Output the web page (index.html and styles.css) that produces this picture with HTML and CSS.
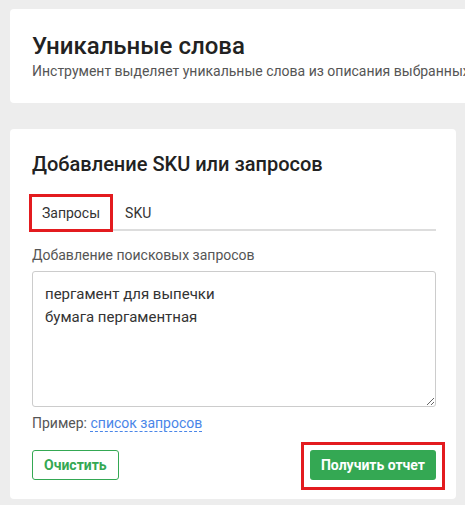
FILE: index.html
```html
<!DOCTYPE html>
<html lang="ru">
<head>
    <meta charset="UTF-8">
    <meta name="viewport" content="width=device-width, initial-scale=1.0">
    <title>Уникальные слова</title>
    <link rel="stylesheet" href="styles.css">
</head>
<body>
    <div class="card card-head">
        <h1>Уникальные слова</h1>
        <div class="subtitle">Инструмент выделяет уникальные слова из описания выбранных товаров</div>
    </div>

    <div class="card card-form">
        <h2>Добавление SKU или запросов</h2>

        <div class="tabs">
            <div class="tab active marked">Запросы</div>
            <div class="tab">SKU</div>
        </div>

        <label class="field-label" for="queries">Добавление поисковых запросов</label>
        <textarea id="queries">пергамент для выпечки
бумага пергаментная</textarea>

        <div class="example">Пример: <a href="#" class="dashed">список запросов</a></div>

        <div class="actions">
            <button class="btn btn-outline">Очистить</button>
            <span class="marked-box">
                <button class="btn btn-green">Получить отчет</button>
            </span>
        </div>
    </div>
</body>
</html>
```

FILE: styles.css
```css
body {
    margin: 0;
    padding: 9px 10px;
    background-color: #ededed;
    font-family: 'Roboto', 'Liberation Sans', sans-serif;
    color: #222;
    overflow: hidden;
}

.card {
    background-color: #fff;
    border-radius: 4px;
    box-sizing: border-box;
}

.card-head {
    width: 640px;
    padding: 23px 22px;
    margin-bottom: 26px;
}

h1 {
    margin: 0;
    font-size: 24px;
    line-height: 28px;
    font-weight: 500;
    color: #222;
}

.subtitle {
    margin-top: 2px;
    font-size: 14px;
    line-height: 18px;
    color: #555;
    white-space: nowrap;
}

.card-form {
    width: 446px;
    padding: 23px 20px 19px 22px;
}

h2 {
    margin: 0;
    font-size: 20px;
    line-height: 24px;
    font-weight: 500;
    color: #222;
}

.tabs {
    display: flex;
    margin-top: 21px;
    border-bottom: 2px solid #ddd;
}

.tab {
    padding: 6px 10px;
    font-size: 14px;
    line-height: 20px;
    color: #333;
    margin-right: 5px;
}

/* красная рамка-выделение */
.marked {
    outline: 3px solid #e31b1f;
    outline-offset: 0;
}

.marked-box {
    display: flex;
    border: 3px solid #e31b1f;
    padding: 5px 6px 7px 6px;
    margin: -8px -9px -10px -9px;
}

.field-label {
    display: block;
    margin-top: 14px;
    font-size: 14px;
    line-height: 20px;
    color: #555;
}

textarea {
    display: block;
    box-sizing: border-box;
    width: 404px;
    height: 136px;
    margin-top: 6px;
    padding: 11px 12px;
    border: 1px solid #ccc;
    border-radius: 3px;
    font-family: 'Roboto', 'Liberation Sans', sans-serif;
    font-size: 15px;
    line-height: 1.5;
    color: #333;
    resize: vertical;
}

.example {
    margin-top: 6px;
    font-size: 14px;
    line-height: 20px;
    color: #555;
}

.dashed {
    color: #4a86e8;
    text-decoration: none;
    border-bottom: 1px dashed #4a86e8;
}

.actions {
    display: flex;
    justify-content: space-between;
    align-items: flex-start;
    margin-top: 17px;
}

.btn {
    height: 30px;
    padding: 0 11px;
    border-radius: 3px;
    font-family: 'Roboto', 'Liberation Sans', sans-serif;
    font-size: 14px;
    font-weight: 700;
    white-space: nowrap;
    cursor: pointer;
}

.btn-outline {
    background-color: #fff;
    color: #34a853;
    border: 1px solid #34a853;
}

.btn-green {
    background-color: #34a853;
    color: #fff;
    border: none;
}
```
